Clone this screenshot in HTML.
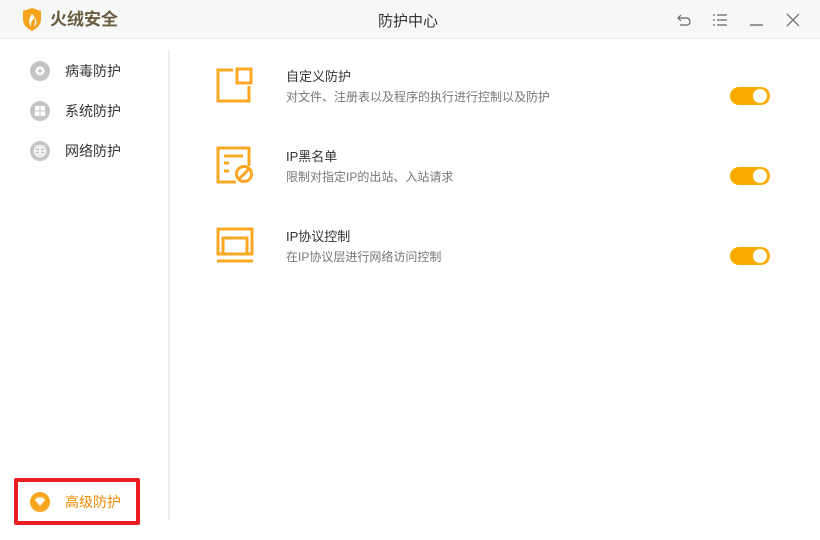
<!DOCTYPE html>
<html><head><meta charset="utf-8"><style>
*{margin:0;padding:0;box-sizing:border-box}
body{width:820px;height:540px;background:#fff;font-family:"Liberation Sans","Noto Sans CJK SC",sans-serif;position:relative;overflow:hidden;color:#333}
.title{position:absolute;left:0;top:0;width:820px;height:39px;background:#f6f7f7;border-bottom:1px solid #e8e8e8}
.abs{position:absolute}
.nav{position:absolute;left:30px;font-size:14px;color:#333}
.nav .ic{position:absolute;left:0;top:0;width:20px;height:20px;border-radius:50%;background:#c4c4c4}
.nav span{position:absolute;left:35px;top:0;white-space:nowrap;line-height:20px}
.item h3{position:absolute;left:286px;font-size:13px;font-weight:normal;color:#333}
.item p{position:absolute;left:286px;font-size:12px;color:#777}
.tg{position:absolute;left:730px;width:40px;height:18px;border-radius:9px;background:#fdab00}
.tg:after{content:"";position:absolute;right:3px;top:2px;width:14px;height:14px;border-radius:50%;background:#fff}
</style></head><body>
<div class="title"></div>
<svg class="abs" style="left:22px;top:8px" width="20" height="23" viewBox="0 0 20 23"><path d="M1 3 L10 0 L19 3 V12 C19 17 14 21 10 23 C6 21 1 17 1 12Z" fill="#f7a21b"/><path d="M10 6 C7 10 6 14 9 19 C8 14 11 12 13 9 C12 12 14 14 12 19 C16 16 15 11 10 6Z" fill="#fff"/></svg>
<div class="abs" style="left:50px;top:9px;font-size:17px;line-height:22px;font-weight:bold;color:#6b5b3e">火绒安全</div>
<div class="abs" style="left:378px;top:10px;font-size:15px;color:#333">防护中心</div>
<svg class="abs" style="left:676px;top:12px" width="16" height="16" viewBox="0 0 16 16" fill="none" stroke="#666" stroke-width="1.2"><path d="M5 3 L2 6 L5 9 M2 6 H10 C13 6 14 8 14 10 C14 12 13 13 10 13 H4"/></svg>
<svg class="abs" style="left:713px;top:13px" width="14" height="14" viewBox="0 0 14 14" stroke="#666" stroke-width="1.2"><path d="M0 2H2M4 2H14M0 7H2M4 7H14M0 12H2M4 12H14"/></svg>
<svg class="abs" style="left:750px;top:13px" width="14" height="14" stroke="#666" stroke-width="1.3"><path d="M0 12H13"/></svg>
<svg class="abs" style="left:786px;top:13px" width="14" height="14" stroke="#777" stroke-width="1.3"><path d="M1 1L13 13M13 1L1 13"/></svg>
<div class="abs" style="left:168px;top:50px;width:2px;height:470px;background:#eee"></div>

<div class="nav" style="top:61px"><div class="ic"><svg width="20" height="20"><circle cx="10" cy="10" r="4.5" fill="#fff"/><path d="M7.5 10H12.5M10 7.5V12.5" stroke="#c4c4c4" stroke-width="1.4"/></svg></div><span>病毒防护</span></div>
<div class="nav" style="top:101px"><div class="ic"><svg width="20" height="20" fill="#fff"><rect x="5" y="5" width="4.5" height="4.5"/><rect x="10.5" y="5" width="4.5" height="4.5"/><rect x="5" y="10.5" width="4.5" height="4.5"/><rect x="10.5" y="10.5" width="4.5" height="4.5"/></svg></div><span>系统防护</span></div>
<div class="nav" style="top:141px"><div class="ic"><svg width="20" height="20" fill="none" stroke="#fff" stroke-width="1.2"><circle cx="10" cy="10" r="5.5"/><path d="M4.5 10H15.5M10 4.5V15.5M6 7H14M6 13H14"/></svg></div><span>网络防护</span></div>

<div class="abs" style="left:14px;top:478px;width:126px;height:47px;border:4px solid #ec1c24;border-radius:2px"></div>
<div class="nav" style="top:492px"><div class="ic" style="background:#f9a620"><svg width="20" height="20" fill="#fff"><path d="M5 8L7 5.5H13L15 8L10 14Z"/></svg></div><span style="color:#f28a00">高级防护</span></div>

<svg class="abs" style="left:216px;top:67px" width="38" height="36" fill="none" stroke="#fba724" stroke-width="3"><path d="M17 3H2V34H33V19"/><rect x="21" y="2" width="14" height="14"/></svg>
<div class="item"><h3 style="top:66px">自定义防护</h3><p style="top:88px">对文件、注册表以及程序的执行进行控制以及防护</p></div>
<div class="tg" style="top:87px"></div>

<svg class="abs" style="left:216px;top:146px" width="38" height="38" fill="none" stroke="#fba724" stroke-width="3"><path d="M20 36H2V2H33V20"/><path d="M8 10H27M8 17H13M8 25H13"/><circle cx="28" cy="28" r="7.5"/><path d="M23 33L33 23"/></svg>
<div class="item"><h3 style="top:146px">IP黑名单</h3><p style="top:168px">限制对指定IP的出站、入站请求</p></div>
<div class="tg" style="top:167px"></div>

<svg class="abs" style="left:216px;top:227px" width="38" height="36" fill="none" stroke="#fba724" stroke-width="3"><rect x="2" y="2" width="34" height="25"/><path d="M7 26V11H31V26"/><path d="M1 34H37"/></svg>
<div class="item"><h3 style="top:226px">IP协议控制</h3><p style="top:248px">在IP协议层进行网络访问控制</p></div>
<div class="tg" style="top:247px"></div>
</body></html>
